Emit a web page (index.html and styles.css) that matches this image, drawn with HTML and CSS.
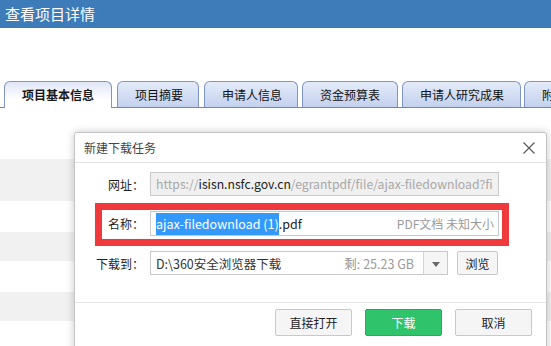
FILE: index.html
```html
<!DOCTYPE html>
<html lang="zh">
<head>
<meta charset="utf-8">
<title>查看项目详情</title>
<link rel="stylesheet" href="styles.css">
</head>
<body>
<div class="page">
  <header class="topbar">查看项目详情</header>
  <nav class="tabs">
    <div class="tab active">项目基本信息</div>
    <div class="tab">项目摘要</div>
    <div class="tab">申请人信息</div>
    <div class="tab">资金预算表</div>
    <div class="tab">申请人研究成果</div>
    <div class="tab">附件</div>
  </nav>
  <div class="rows">
    <div class="row r1"></div>
    <div class="row r2 gray"></div>
    <div class="row r3"></div>
    <div class="row r4 gray"></div>
    <div class="row r5"></div>
    <div class="row r6 gray"></div>
    <div class="row r7"></div>
  </div>

  <div class="dialog">
    <div class="dlg-title">
      <span>新建下载任务</span>
      <svg class="close" width="12" height="12" viewBox="0 0 12 12"><path d="M0.5 0.5 L11.5 11.5 M11.5 0.5 L0.5 11.5" stroke="#5a5a5a" stroke-width="1.2" fill="none"/></svg>
    </div>
    <div class="form">
      <div class="frow">
        <label class="flabel">网址：</label>
        <div class="field url"><span class="dim">https://</span>isisn.nsfc.gov.cn<span class="dim">/egrantpdf/file/ajax-filedownload?fi</span></div>
      </div>
      <div class="frow tall">
        <label class="flabel">名称：</label>
        <div class="field name"><span class="fname"><span class="sel">ajax-filedownload (1)</span>.pdf</span><span class="meta">PDF文档 未知大小</span></div>
      </div>
      <div class="frow">
        <label class="flabel">下载到：</label>
        <div class="pathgroup">
          <div class="select">
            <span class="path">D:\360安全浏览器下载</span>
            <span class="meta">剩: 25.23 GB</span>
            <span class="arrow"></span>
          </div>
          <button class="btn small">浏览</button>
        </div>
      </div>
    </div>
    <div class="footer">
      <button class="btn big">直接打开</button>
      <button class="btn big primary">下载</button>
      <button class="btn big">取消</button>
    </div>
    <div class="highlight"></div>
  </div>
</div>
</body>
</html>
```
FILE: styles.css
```css
* { box-sizing: border-box; }
html, body { margin: 0; padding: 0; }
body {
  width: 551px;
  height: 346px;
  overflow: hidden;
  background: #fff;
  font-family: "Noto Sans CJK SC", "Microsoft YaHei", sans-serif;
  color: #333;
}
.page { position: relative; width: 551px; height: 346px; overflow: hidden; }

.topbar {
  height: 28px;
  background: #3d7cb9;
  color: #fff;
  font-size: 15px;
  line-height: 28px;
  padding-left: 5px;
}

.tabs {
  margin-top: 53px;
  height: 27px;
  display: flex;
  gap: 4px;
  padding-left: 4px;
  border-bottom: 1px solid #6f87b9;
  white-space: nowrap;
}
.tab {
  flex: none;
  height: 26px;
  padding: 0 17px;
  font-size: 12px;
  line-height: 25px;
  color: #111;
  border: 1px solid #7f95c4;
  border-bottom: none;
  border-radius: 6px 6px 0 0;
  background: linear-gradient(#e4ebf9, #c3d1ed);
}
.tab:nth-child(2) { margin-left: 1px; width: 82px; }
.tab:nth-child(3) { margin-left: 1px; width: 94px; }
.tab:nth-child(4) { width: 96px; }
.tab:nth-child(5) { width: 119px; }
.tab:nth-child(6) { margin-left: -1px; }
.tab.active {
  width: 108px;
  height: 27px;
  font-weight: bold;
  background: linear-gradient(#dfe6f5, #ffffff 70%);
  color: #1a1a1a;
  position: relative;
  z-index: 1;
}

.rows { display: flex; flex-direction: column; }
.row { flex: none; }
.row.gray { background: #f1f1f1; }
.r1 { height: 51px; }
.r2 { height: 42px; }
.r3 { height: 31px; }
.r4 { height: 29px; }
.r5 { height: 31px; }
.r6 { height: 29px; }
.r7 { height: 30px; }

.dialog {
  position: absolute;
  left: 74px;
  top: 132px;
  width: 473px;
  height: 240px;
  background: #fff;
  border: 1px solid #c4c4c4;
  border-radius: 3px 3px 0 0;
  box-shadow: 0 0 8px rgba(0,0,0,0.22);
}
.dlg-title {
  height: 30px;
  border-bottom: 1px solid #e2e2e2;
  display: flex;
  align-items: center;
  justify-content: space-between;
  padding: 0 11px 0 9px;
  font-size: 12px;
  color: #444;
}
.close { display: block; }

.form {
  padding-top: 9px;
  display: flex;
  flex-direction: column;
  gap: 15px;
}
.frow {
  display: grid;
  grid-template-columns: 69px 349px;
  column-gap: 6px;
  height: 24px;
  align-items: center;
}
.frow.tall { height: 25px; }
.flabel {
  text-align: right;
  font-size: 12px;
  color: #1e1e1e;
}
.field {
  height: 100%;
  border: 1px solid #c9c9c9;
  display: flex;
  align-items: center;
  padding: 0 5px;
  font-size: 12.5px;
  white-space: nowrap;
  overflow: hidden;
  color: #222;
}
.field.url { background: #f0f0f0; font-size: 12.2px; padding-left: 5px; }
.dim { color: #a8a8a8; }
.field.name { justify-content: space-between; padding-right: 4px; }
.sel { background: #3399ff; color: #fff; padding: 1px 0 2px; }
.meta { color: #9a9a9a; font-size: 12px; }

.pathgroup { display: flex; gap: 9px; height: 100%; }
.select {
  width: 298px;
  height: 100%;
  border: 1px solid #c9c9c9;
  display: flex;
  align-items: center;
  padding-left: 5px;
  font-size: 12.5px;
  color: #333;
}
.select .path { flex: 1; }
.select .meta { font-size: 12.5px; padding-right: 9px; }
.arrow {
  align-self: stretch;
  width: 24px;
  border-left: 1px solid #d4d4d4;
  background: #f5f5f5;
  position: relative;
}
.arrow::after {
  content: "";
  position: absolute;
  left: 8px;
  top: 10px;
  border-left: 4px solid transparent;
  border-right: 4px solid transparent;
  border-top: 5px solid #6a6a6a;
}

.btn {
  font-family: inherit;
  font-size: 12px;
  color: #222;
  background: #f5f5f5;
  border: 1px solid #c8c8c8;
  border-radius: 2px;
  padding: 0;
  cursor: default;
}
.btn.small { width: 41px; height: 24px; }
.footer {
  margin-top: 27px;
  border-top: 1px solid #e6e6e6;
  padding: 6px 14px 0 0;
  display: flex;
  justify-content: flex-end;
  gap: 13px;
}
.btn.big { width: 77px; height: 27px; }
.btn.primary {
  background: #2fc46b;
  border-color: #27ad5d;
  color: #fff;
}

.highlight {
  position: absolute;
  left: 20px;
  top: 70px;
  width: 414px;
  height: 43px;
  border: 7px solid #f0393d;
}
```
